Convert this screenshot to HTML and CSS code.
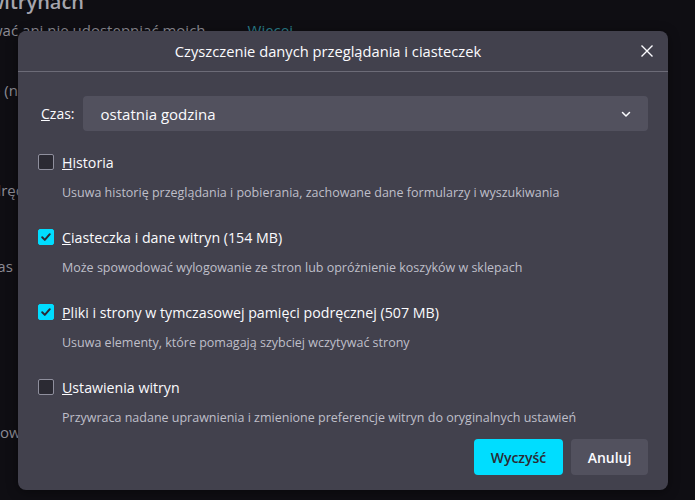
FILE: index.html
```html
<!DOCTYPE html>
<html lang="pl">

<head>
    <meta charset="UTF-8">
    <meta name="viewport" content="width=device-width, initial-scale=1.0">
    <title>Czyszczenie danych</title>
    <link rel="stylesheet" href="styles.css">
</head>

<body>
    <div class="page">
        <div class="page-heading">witrynach</div>
        <div class="page-line">
            <span>wać ani nie udostępniać moich</span>
            <span class="page-link">Więcej</span>
        </div>
        <div class="page-line page-line-2">e (n</div>
        <div class="page-line page-line-3">dręc</div>
        <div class="page-line page-line-4">tas</div>
        <div class="page-line page-line-5">kow</div>
    </div>

    <div class="dialog">
        <div class="dialog-header">
            <span class="dialog-title">Czyszczenie danych przeglądania i ciasteczek</span>
            <button class="close-btn" aria-label="Zamknij">
                <svg width="14" height="14" viewBox="0 0 14 14">
                    <path d="M1.5 1.5 L12.5 12.5 M12.5 1.5 L1.5 12.5" stroke="#fbfbfe" stroke-width="1.4" fill="none" />
                </svg>
            </button>
        </div>

        <div class="dialog-body">
            <div class="time-row">
                <label class="time-label"><u>C</u>zas:</label>
                <div class="select">
                    <span>ostatnia godzina</span>
                    <svg width="12" height="12" viewBox="0 0 12 12">
                        <path d="M2.5 4.5 L6 8 L9.5 4.5" stroke="#fbfbfe" stroke-width="1.5" fill="none" stroke-linecap="round" stroke-linejoin="round" />
                    </svg>
                </div>
            </div>

            <div class="options">
                <div class="option">
                    <div class="option-label">
                        <span class="checkbox"></span>
                        <span><u>H</u>istoria</span>
                    </div>
                    <div class="option-desc">Usuwa historię przeglądania i pobierania, zachowane dane formularzy i wyszukiwania</div>
                </div>
                <div class="option">
                    <div class="option-label">
                        <span class="checkbox checked">
                            <svg width="12" height="12" viewBox="0 0 12 12">
                                <path d="M2.2 6.3 L4.8 8.9 L9.8 3.2" stroke="#2b2a33" stroke-width="2" fill="none" stroke-linecap="round" stroke-linejoin="round" />
                            </svg>
                        </span>
                        <span><u>C</u>iasteczka i dane witryn (154 MB)</span>
                    </div>
                    <div class="option-desc">Może spowodować wylogowanie ze stron lub opróżnienie koszyków w sklepach</div>
                </div>
                <div class="option">
                    <div class="option-label">
                        <span class="checkbox checked">
                            <svg width="12" height="12" viewBox="0 0 12 12">
                                <path d="M2.2 6.3 L4.8 8.9 L9.8 3.2" stroke="#2b2a33" stroke-width="2" fill="none" stroke-linecap="round" stroke-linejoin="round" />
                            </svg>
                        </span>
                        <span><u>P</u>liki i strony w tymczasowej pamięci podręcznej (507 MB)</span>
                    </div>
                    <div class="option-desc">Usuwa elementy, które pomagają szybciej wczytywać strony</div>
                </div>
                <div class="option">
                    <div class="option-label">
                        <span class="checkbox"></span>
                        <span><u>U</u>stawienia witryn</span>
                    </div>
                    <div class="option-desc">Przywraca nadane uprawnienia i zmienione preferencje witryn do oryginalnych ustawień</div>
                </div>
            </div>

            <div class="actions">
                <button class="btn btn-primary">Wyczyść</button>
                <button class="btn">Anuluj</button>
            </div>
        </div>
    </div>
</body>

</html>
```

FILE: styles.css
```css
body {
    margin: 0;
    background: #0f0e13;
    font-family: "Open Sans", "Noto Sans", sans-serif;
    color: #fbfbfe;
    height: 500px;
    overflow: hidden;
}

.page {
    color: #8c8b93;
    font-size: 15px;
}

.page-heading {
    margin-top: -12px;
    margin-left: -12px;
    font-size: 20px;
    font-weight: 600;
    color: #a6a5ad;
    height: 32px;
}

.page-line {
    display: flex;
    gap: 42px;
    margin-left: -9px;
    line-height: 20px;
}

.page-link {
    color: #2a7f8c;
}

.page-line-2 {
    margin-top: 40px;
    margin-left: -8px;
}

.page-line-3 {
    margin-top: 80px;
    margin-left: -8px;
}

.page-line-4 {
    margin-top: 56px;
    margin-left: -8px;
}

.page-line-5 {
    margin-top: 146px;
    margin-left: -8px;
}

.dialog {
    position: absolute;
    left: 18px;
    top: 31px;
    width: 650px;
    height: 459px;
    background: #42414d;
    border-radius: 8px;
    display: flex;
    flex-direction: column;
    box-shadow: 0 2px 12px rgba(0, 0, 0, 0.4);
}

.dialog-header {
    height: 40px;
    border-bottom: 1px solid #6c6b77;
    display: flex;
    align-items: center;
    justify-content: center;
    padding-right: 30px;
    position: relative;
}

.dialog-title {
    font-size: 14.7px;
}

.close-btn {
    position: absolute;
    right: 13px;
    top: 12px;
    width: 16px;
    height: 16px;
    padding: 0;
    border: none;
    background: none;
    display: flex;
    align-items: center;
    justify-content: center;
}

.dialog-body {
    flex: 1;
    padding: 24px 20px 15px 20px;
    display: flex;
    flex-direction: column;
}

.time-row {
    display: flex;
    align-items: center;
    gap: 8px;
}

.time-label {
    margin-left: 3px;
    font-size: 14px;
    color: #fbfbfe;
}

.select {
    flex: 1;
    height: 35px;
    background: #52515e;
    border-radius: 4px;
    display: flex;
    align-items: center;
    justify-content: space-between;
    padding: 0 16px 0 18px;
    font-size: 15px;
}

.options {
    margin-top: 19px;
    display: flex;
    flex-direction: column;
    gap: 22px;
}

.option-label {
    display: flex;
    align-items: center;
    gap: 8px;
    height: 24px;
    font-size: 14.2px;
}

.checkbox {
    width: 14px;
    height: 14px;
    border: 1px solid #8f8f9d;
    border-radius: 2px;
    background: #2b2a33;
    display: flex;
    align-items: center;
    justify-content: center;
}

.checkbox.checked {
    background: #00ddff;
    border-color: #00ddff;
}

.option-desc {
    margin-top: 9px;
    margin-left: 24px;
    line-height: 20px;
    font-size: 12.5px;
    color: #bfbfc9;
}

.actions {
    margin-top: auto;
    display: flex;
    justify-content: flex-end;
    gap: 8px;
}

.btn {
    height: 36px;
    min-width: 77px;
    padding: 0 15px;
    border: none;
    border-radius: 4px;
    background: #52515e;
    color: #fbfbfe;
    font-family: inherit;
    font-size: 14px;
    font-weight: 600;
}

.btn-primary {
    width: 89px;
    background: #00ddff;
    color: #2b2a33;
}
```
